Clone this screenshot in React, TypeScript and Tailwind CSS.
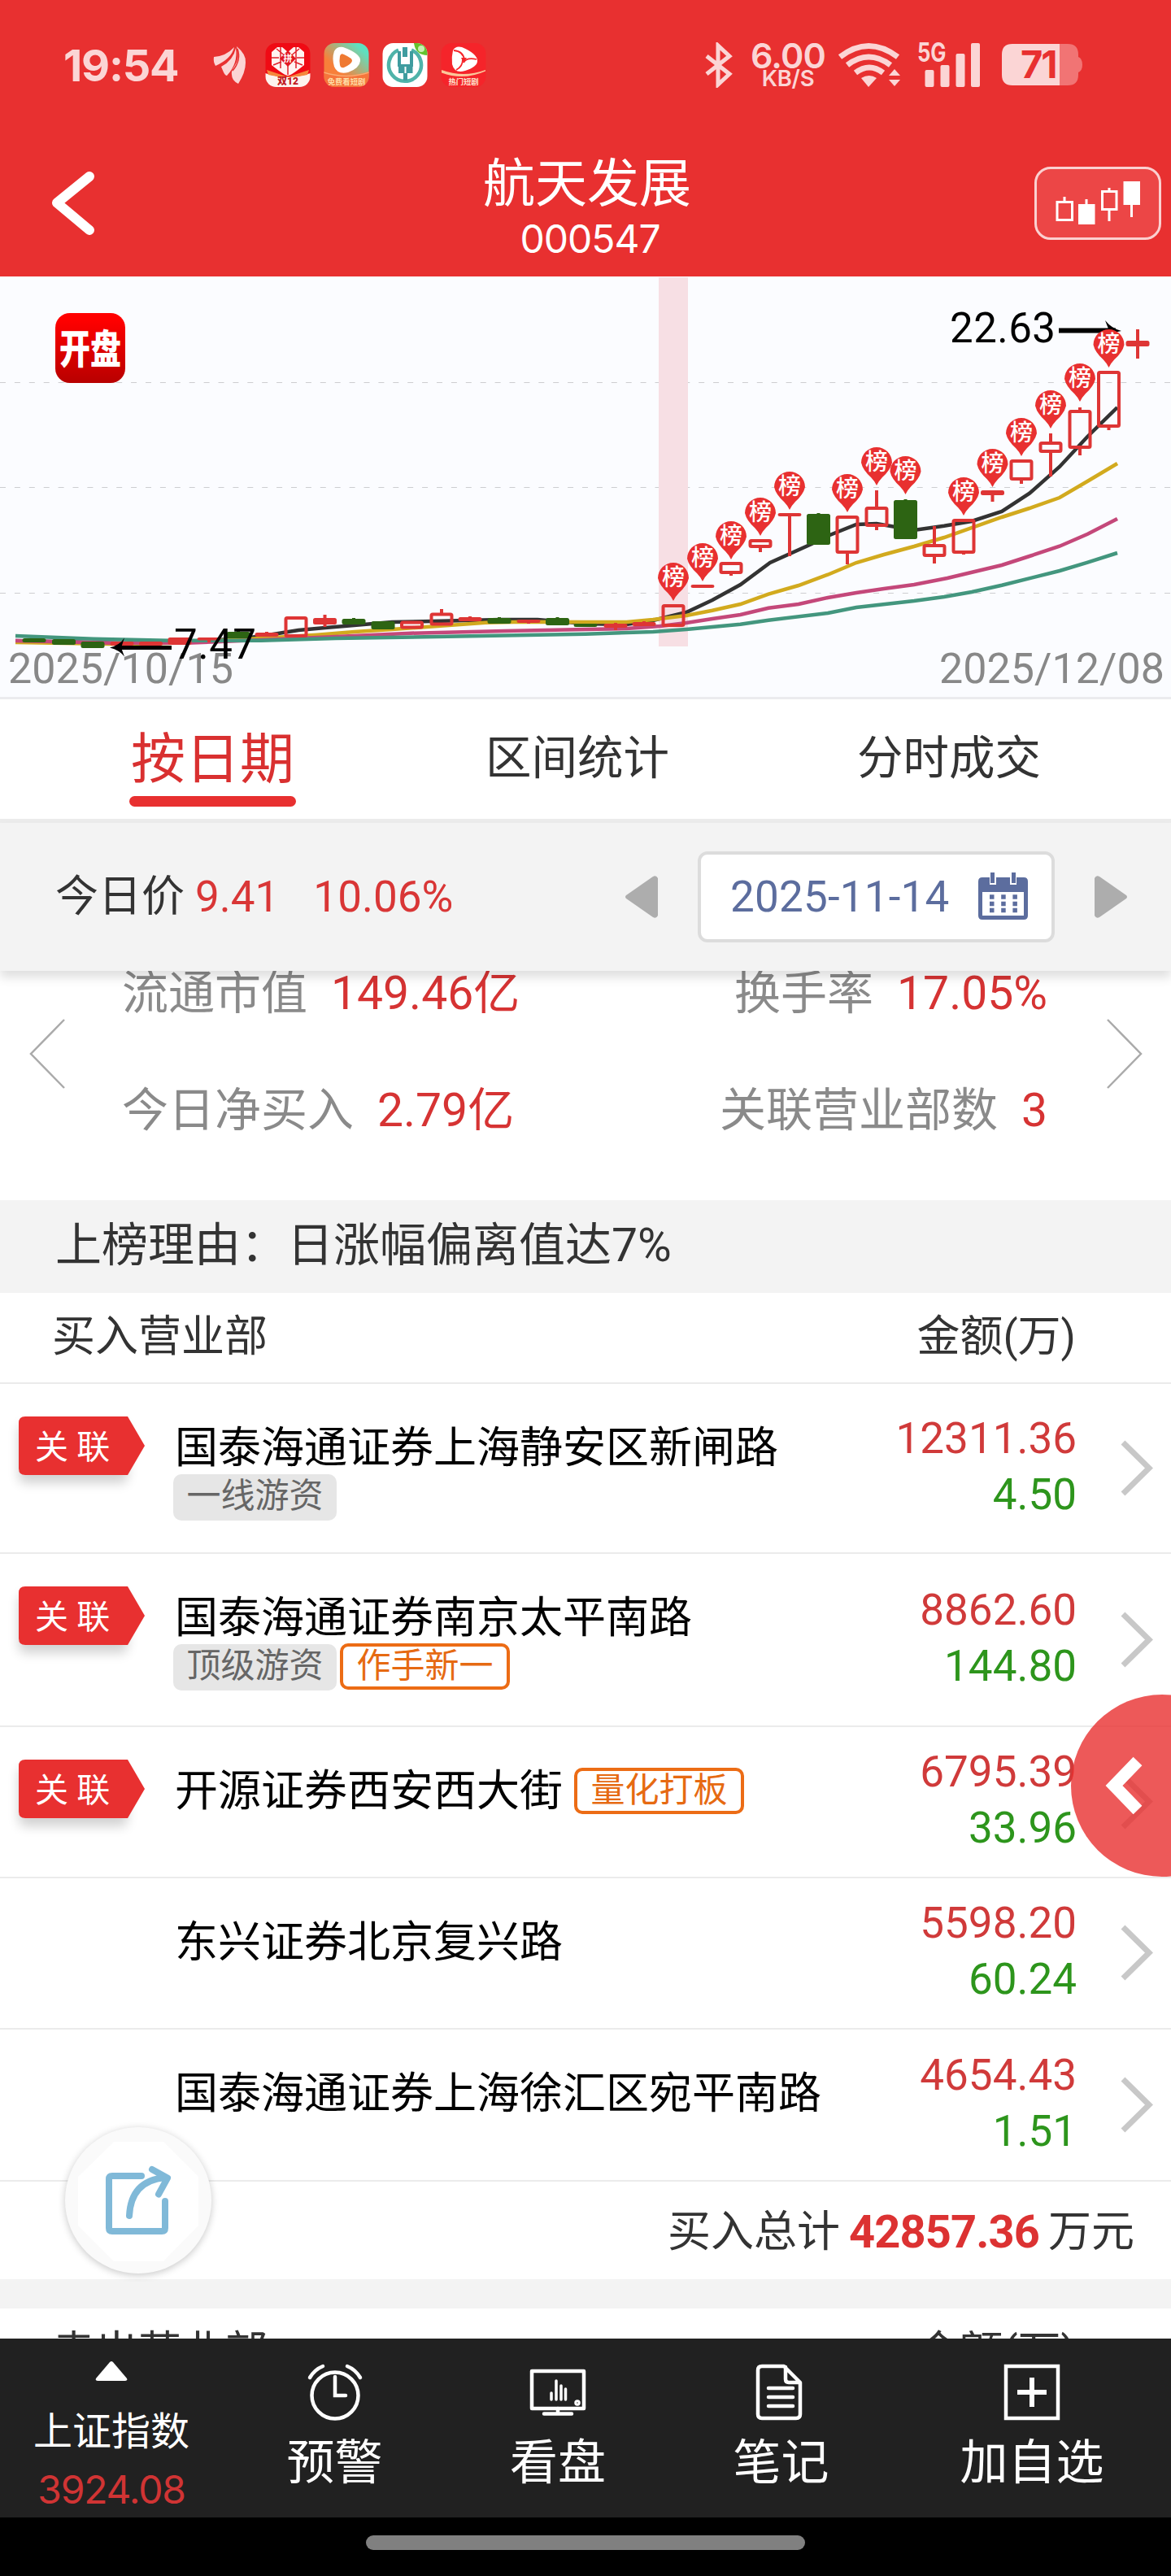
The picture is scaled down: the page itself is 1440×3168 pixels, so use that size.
import type { ReactNode } from "react";
import clsx from "clsx";

type Tag = { text: string; hot?: boolean };
type Dept = { name: string; linked?: boolean; inlineTag?: boolean; tags?: Tag[]; buy: string; sell: string; height: string };

const DEPTS: Dept[] = [
    { name: "国泰海通证券上海静安区新闸路", linked: true, tags: [{ text: "一线游资" }], buy: "12311.36", sell: "4.50", height: "h-[209px]" },
    { name: "国泰海通证券南京太平南路", linked: true, tags: [{ text: "顶级游资" }, { text: "作手新一", hot: true }], buy: "8862.60", sell: "144.80", height: "h-[213px]" },
    { name: "开源证券西安西大街", linked: true, inlineTag: true, tags: [{ text: "量化打板", hot: true }], buy: "6795.39", sell: "33.96", height: "h-[186px]" },
    { name: "东兴证券北京复兴路", buy: "5598.20", sell: "60.24", height: "h-[186px]" },
    { name: "国泰海通证券上海徐汇区宛平南路", buy: "4654.43", sell: "1.51", height: "h-[187px]" },
];

const RED = "#de3535";
const GREEN = "#2d6413";

// x, body top, body bottom, high, low, kind (g: falling, r: solid red, o: hollow red)
const CANDLES: [number, number, number, number, number, string][] = [
    [42, 785, 790, 785, 790, "g"],
    [78.5, 786, 793, 786, 793, "g"],
    [114, 789, 797, 789, 797, "g"],
    [150, 789, 794, 789, 794, "r"],
    [185.5, 789, 794, 789, 794, "r"],
    [221, 784, 793, 784, 793, "r"],
    [257, 784, 787.5, 784, 790, "r"],
    [293, 777, 785, 776, 785, "g"],
    [328, 778, 783, 777, 783, "r"],
    [364, 758, 784, 758, 784, "o"],
    [399.5, 760, 768, 756, 771, "r"],
    [435, 761, 768, 760, 768, "g"],
    [471, 764, 774, 764, 774, "g"],
    [506.5, 763.5, 773.5, 763.5, 773.5, "o"],
    [543, 753.5, 769.5, 749, 769.5, "o"],
    [578, 759, 764, 758, 764, "r"],
    [614, 760, 767, 759, 767, "g"],
    [650, 762, 766, 762, 767, "r"],
    [685.5, 760, 769, 759, 769, "g"],
    [720, 767, 771, 767, 771, "g"],
    [757, 767, 772, 766, 775, "r"],
    [792, 765, 770, 764, 770, "r"],
    [828, 743, 771, 743, 771, "o"],
    [864, 719, 723, 719, 723, "r"],
    [899, 691, 706, 691, 708, "o"],
    [935, 663, 674, 663, 679, "o"],
    [971, 631, 635, 631, 684, "r"],
    [1006.5, 632, 670, 631, 670, "g"],
    [1042, 634, 681, 634, 694, "o"],
    [1078, 623, 648, 603, 652, "o"],
    [1113.5, 615, 663, 614, 663, "g"],
    [1149, 669, 685, 647, 693, "o"],
    [1185, 638, 681, 638, 682, "o"],
    [1220.5, 603, 609, 603, 617, "r"],
    [1256, 565, 591, 565, 595, "o"],
    [1292, 543, 557, 533, 586, "o"],
    [1328, 504, 552, 501, 560, "o"],
    [1363.5, 456, 526, 456, 529, "o"],
    [1399, 419, 426, 405, 441, "r"],
];

const PINS = [
    [828, 692], [864, 668], [899, 641], [935, 612], [971, 580], [1042, 583], [1078, 550],
    [1113.5, 561], [1185, 587], [1220.5, 552], [1256, 514], [1292, 480], [1328, 447], [1363.5, 405],
];

const MA = [
    { color: "#333333", points: "19,788 115,790 170,792 207,790 257,788 317,783 367,775 400,772 459,767 482,765 543,763.7 615,762 661,762 720,767 770,768 803,763 844,753 876,738 910.5,719 947,692 998,669 1018,659 1053,645 1078,644 1124,652 1161,646.7 1195,641 1232,629 1266,606.7 1303,574 1337.5,536.7 1374,501" },
    { color: "#d2aa1e", points: "19,790 138,792 207,791 321,785 390,780.7 436,777 482,774 528,770.7 597,765.7 643,764.7 720,765 770.5,765 803,762 844,757 876,750.7 910.5,743 945,730.7 982,720 1018,706.7 1053,692 1087,682 1124,672 1161,661 1232,636 1266,625 1303,612 1337.5,591.7 1374,570" },
    { color: "#c4487a", points: "19,788 138,790.7 230,790.7 321,787 413,783 505,778.7 620,776 720,774 770.5,773 812,770 844,766 876,761 910.5,756 945,747.7 982,743 1018,735 1053,729 1087,724 1124,719 1165,711 1232,695 1266,684 1303,671.7 1337.5,656.7 1374,638" },
    { color: "#43967e", points: "19,782 115,785.7 207,787.7 321,787.7 413,785 551,782.7 720,779.7 803,777 844,774 876,771 910.5,767.7 945,762.7 1018,754 1053,747 1124,739 1161,734 1195,728 1232,719.7 1303,702 1337.5,691.7 1374,680" },
];

function AppIcons() {
    return (
        <svg className="ml-[42px] h-[54px] w-[336px]" viewBox="262 53 336 54">
            <defs>
                <linearGradient id="video" x1="0" y1="1" x2="1" y2="0">
                    <stop offset="0.35" stopColor="#f7803a" />
                    <stop offset="0.85" stopColor="#5fe0c0" />
                </linearGradient>
                <clipPath id="a1"><rect x="326.5" y="53" width="55" height="54" rx="13" /></clipPath>
                <clipPath id="a2"><rect x="398.5" y="53" width="55" height="54" rx="13" /></clipPath>
                <clipPath id="a3"><rect x="470.5" y="53" width="55" height="54" rx="13" /></clipPath>
            </defs>
            <g fill="#fbd5d5">
                <path d="M263 70q15-1 25-12-3 14-23 23-3-5-2-11z" />
                <path d="M272 82q15-8 18-23 3 19-11 34-2 0-4-4z" />
                <path d="M291 57q12 10 11 20 0 12-9 26-8-4-8-11-1-4 3-10 8-11 3-25z" />
            </g>
            <path d="M292 60q5 14-6 27" fill="none" stroke="#e83030" strokeWidth="1.500" />
            <g clipPath="url(#a1)">
                <rect x="326" y="53" width="56" height="54" fill="#f00a14" />
                <path d="M326 90q28 9 56 0v18h-56z" fill="#fdf3ee" />
                <path d="M328 86l24 8h4l24-8-2 6q-24 6-48 0z" fill="#f5883c" />
                <path d="M354 93q-4 0-20-13V64l7-6h6l7 6 7-6h6l7 6v16q-16 13-20 13z" fill="#fff3f1" />
                <path d="M354 81v11M334 71h9M365 71h9M340 60l12 10M368 60l-12 10M345 58v26M364 58v26M336 80l10-4M372 80l-10-4" stroke="#e0202a" strokeWidth="1.500" />
                <path d="M354 62l10 10-10 10-10-10z" fill="#e31822" />
                <text x="354" y="76" fontSize="11" fontWeight="700" fill="#fff" textAnchor="middle">拼</text>
                <text x="354" y="104" fontSize="12" fontWeight="900" fill="#c01820" textAnchor="middle">双12</text>
            </g>
            <g clipPath="url(#a2)">
                <rect x="398" y="53" width="56" height="54" fill="url(#video)" />
                <path d="M398 88q28 9 56 0v20h-56z" fill="#f6753b" />
                <path d="M398 89q28 9 56 0" fill="none" stroke="#f9ad72" strokeWidth="1.500" />
                <path d="M411 63q3-6 11-5 22 8 21 17-1 9-15 14-13 3-17-7-3-10 0-19z" fill="#fff" />
                <path d="M418 69q1-4 5-2 11 5 10 8-1 4-10 8-4 1-5-3-1-5 0-11z" fill="#ef7a33" />
                <text x="426" y="103.500" fontSize="9.300" fontWeight="700" fill="#fde0a8" textAnchor="middle">免费看短剧</text>
            </g>
            <g clipPath="url(#a3)">
                <rect x="470" y="53" width="56" height="54" fill="#fff" />
                <path d="M509 53h17v15q-15 0-17-15z" fill="#63c32f" />
                <path d="M490 61.500a20 20 0 1 0 16 0" stroke="#4fb3a9" strokeWidth="4.500" fill="none" />
                <path d="M495 58h6v12h-6zM489 63h4v16h11V63h4v19h-19zM490 81h7.500v9H490zM499.500 81h8v9h-8zM496 90h5v9h-5z" fill="#3f9c9f" />
                <circle cx="518" cy="60" r="4" fill="#c9efb4" />
            </g>
            <rect x="542.500" y="53" width="55" height="54" rx="13" fill="#f5242a" />
            <path d="M543 86q27 10 54 0v1.500q-27 12-54 2z" fill="#fbc79a" />
            <path d="M557 62q3-6 11-4 19 8 19 17 0 7-15 12-13 4-16-8-1-9 1-17z" fill="#fff" />
            <path d="M558 62q12 1 13 12M586 73q-12-3-16 4M561 86q8-4 8-13" stroke="#f5242a" strokeWidth="1.800" fill="none" />
            <path d="M567 71h7l-4 6z" fill="#f5242a" />
            <text x="570" y="103.500" fontSize="9.300" fontWeight="700" fill="#fde6d0" textAnchor="middle">热门短剧</text>
        </svg>
    );
}

function SystemIcons() {
    return (
        <div className="flex items-center text-[#fbd5d5]">
            <svg className="h-[56px] w-[36px]" viewBox="866 52 36 56">
                <path d="M869 69l28 22-14 13V56l14 13-28 22" fill="none" stroke="#fbd5d5" strokeWidth="5" />
            </svg>
            <div className="ml-[12px] mr-[5px] flex w-[110px] flex-col items-center whitespace-nowrap font-['Inter'] font-semibold">
                <span className="h-[32px] text-[43px] leading-[32px] tracking-[-0.8px]">6.00</span>
                <span className="h-[24px] text-[27.5px] leading-[25px] tracking-[-0.3px]">KB/S</span>
            </div>
            <svg className="h-[56px] w-[80px]" viewBox="1029 52 80 56" fill="#fbd5d5">
                <g fill="none" stroke="#fbd5d5" strokeWidth="7">
                    <path d="M1033 70q35-27 71 0" />
                    <path d="M1042 80q26-20 53 0" />
                    <path d="M1052 89.500q17-13 34 0" />
                </g>
                <path d="M1059 96q10-6 19 0l-10 11z" />
                <path d="M1093 93l7-8 7 8zM1093 98h14l-7 8z" />
            </svg>
            <div className="relative ml-[18px] h-[56px] w-[80px]">
                <svg className="h-[56px] w-[80px]" viewBox="1127 52 80 56" fill="#fbd5d5">
                    <rect x="1137.500" y="86" width="11" height="21" rx="2" />
                    <rect x="1156.500" y="80" width="11" height="27" rx="2" />
                    <rect x="1175.500" y="66" width="11" height="41" rx="2" />
                    <rect x="1194" y="53" width="11" height="54" rx="2" />
                </svg>
                <span className="absolute left-[1px] top-[-3px] origin-left scale-x-80 font-['Inter'] text-[32px] font-bold leading-[32px]">5G</span>
            </div>
            <div className="relative ml-[24px] mt-[2px] h-[56px] w-[102px]">
                <svg className="h-[56px] w-[102px]" viewBox="1230 55 102 56">
                    <path d="M1302 56h10q13 0 13 13v3q5 2 5 9.500t-5 9.500v3q0 13-13 13h-10z" fill="#f17474" />
                    <path d="M1302 56h-58q-13 0-13 13v25q0 13 13 13h58z" fill="#fbd5d5" />
                </svg>
                <span className="absolute left-[24px] top-[2px] font-['Inter'] text-[47px] font-bold leading-[48px] tracking-[-2px] text-[#e83030]">71</span>
            </div>
        </div>
    );
}

function Header() {
    return (
        <header className="h-[340px] bg-[#e83030] text-white">
            {/* STATUS BAR */}
            <div className="flex h-[160px] items-center pl-[78px] pr-[107px]">
                <div className="w-[142px] whitespace-nowrap font-['Inter'] text-[54px] font-bold tracking-[-1.2px] text-[#fbd5d5]">19:54</div>
                <AppIcons />
                <div className="ml-auto"><SystemIcons /></div>
            </div>

            {/* TITLE */}
            <div className="flex h-[180px] items-start pl-[62px] pr-[12px]">
                <svg className="mt-[48px] h-[84px] w-[58px]" viewBox="62 208 58 84">
                    <path d="M110 217L70 249.500L110 283" fill="none" stroke="#fff" strokeWidth="12" strokeLinecap="round" strokeLinejoin="round" />
                </svg>
                <div className="ml-[52px] flex-1 pt-[27px] text-center">
                    <h1 className="text-[64px] leading-[80px]">航天发展</h1>
                    <p className="pl-[7px] font-['Inter'] text-[48px] leading-[54px] tracking-[-1px]">000547</p>
                </div>
                <button className="mt-[45px] h-[90px] w-[156px] rounded-[20px] border-3 border-[#fbd0d0] bg-[#ec4646]">
                    <svg className="h-[84px] w-[150px]" viewBox="1275 208 150 84" fill="none" stroke="#fff" strokeWidth="3">
                        <path d="M1309 242v5M1300 248.500h18.500v22h-18.500z" />
                        <path d="M1336 245v8M1327.500 252.500h17.500v22h-17.500z" fill="#fff" />
                        <path d="M1364 231v5M1355.500 235.500h17.500v22h-17.500zM1364 258v14" />
                        <path d="M1391.500 251v16M1383 224.500h17.500v26H1383z" fill="#fff" />
                    </svg>
                </button>
            </div>
        </header>
    );
}

function KLineChart() {
    return (
        <svg className="block h-[520px] w-full border-b-3 border-[#ebebee] bg-[#fbfcff]" viewBox="0 340 1440 517" preserveAspectRatio="none">
            <defs>
                <linearGradient id="logo" x1="0" y1="0" x2="0" y2="1">
                    <stop offset="0.1" stopColor="#ff0000" />
                    <stop offset="1" stopColor="#b80000" />
                </linearGradient>
            </defs>
            {[470, 599, 729].map((y) => (
                <line key={y} x1="0" x2="1440" y1={y + 0.5} y2={y + 0.5} stroke="#cdcdd0" strokeDasharray="7 10.900" />
            ))}
            <rect x="810" y="341" width="36" height="454" fill="#f7dfe4" />
            <rect x="68" y="385" width="86" height="86" rx="18" fill="url(#logo)" />
            <text transform="translate(111 447) scale(1 1.280)" fontSize="38" fontWeight="900" fill="#fff" textAnchor="middle">开盘</text>

            <text x="10" y="840" fontSize="52" fill="#888" textLength="277">2025/10/15</text>
            <text x="1155" y="840" fontSize="52" fill="#888" textLength="277">2025/12/08</text>

            {MA.map((line) => (
                <polyline key={line.color} points={line.points} fill="none" stroke={line.color} strokeWidth="4.500" />
            ))}
            {CANDLES.map(([x, top, bottom, high, low, kind]) => {
                const color = kind === "g" ? GREEN : RED;
                return (
                    <g key={x}>
                        {high < top && <line x1={x} x2={x} y1={high} y2={top + 2} stroke={color} strokeWidth="4" />}
                        {low > bottom && <line x1={x} x2={x} y1={bottom - 2} y2={low} stroke={color} strokeWidth="4" />}
                        {kind === "o" ? (
                            <rect x={x - 12.5} y={top + 2} width="25" height={bottom - top - 4} rx="1.500" fill="none" stroke={color} strokeWidth="4" />
                        ) : (
                            <rect x={x - 14.5} y={top} width="29" height={bottom - top} rx="2.500" fill={color} />
                        )}
                    </g>
                );
            })}
            <path d="M211 796.500h-68" stroke="#000" strokeWidth="5" />
            <path d="M135 796.500q12-3 18-12l-4 12 4 11q-6-8-18-11z" />
            <text x="214" y="809.500" fontSize="51" textLength="101">7.47</text>
            <text x="1168" y="421" fontSize="51" textLength="130">22.63</text>
            <path d="M1302 406.500h70" stroke="#000" strokeWidth="6" />
            <path d="M1379 407q-12-3-20-13l5 13-5 9q8-7 20-9z" />
            {PINS.map(([x, y]) => (
                <g key={x} transform={`translate(${x} ${y})`}>
                    <path d="M-19 19A19 19 0 1 1 19 19Q17 28 7 37Q3 41 0 47Q-3 41-7 37Q-17 28-19 19z" fill="#e83030" />
                    <text y="28" fontSize="28" fontWeight="500" fill="#fff" textAnchor="middle">榜</text>
                </g>
            ))}
        </svg>
    );
}

function Tabs() {
    return (
        <nav className="flex h-[152px] items-start border-b-5 border-[#ececec] bg-white text-[56.500px] text-[#333]">
            <div className="ml-[159px] w-[205px] text-center text-[67px] leading-[80px] text-[#d93030]">
                <div className="mt-[34px]">按日期</div>
                <div className="mt-[5px] h-[13px] rounded-full bg-[#e83030]" />
            </div>
            <div className="ml-[232px] mt-[33px] w-[228px] whitespace-nowrap text-center leading-[80px]">区间统计</div>
            <div className="ml-[229px] mt-[33px] w-[228px] whitespace-nowrap text-center leading-[80px]">分时成交</div>
        </nav>
    );
}

function DateBar() {
    return (
        <div className="relative z-10 flex h-[182px] items-center bg-[#f3f3f3] pl-[68px] text-[53px] leading-[60px] shadow-[0_8px_12px_rgba(0,0,0,0.13)]">
            <span className="text-[#333]">今日价</span>
            <span className="ml-[13px] text-[#d93636]">9.41</span>
            <span className="ml-[42px] text-[#d93636]">10.06%</span>
            <svg className="ml-auto h-[52px] w-[40px]" viewBox="0 0 40 52"><path d="M40 3v46q-2 4-6 2L1 28q-2-2 0-4L34 1q4-2 6 2z" fill="#adadad" /></svg>
            <div className="ml-[49px] flex h-[112px] w-[439px] items-center rounded-[12px] border-4 border-[#dcdcdc] bg-white pl-[36px] text-[#5c6d9e]">
                <span className="tracking-[0.2px]">2025-11-14</span>
                <svg className="mb-[2px] ml-auto mr-[29px] h-[58px] w-[61px]" viewBox="0 0 61 58">
                    <path d="M5 6h9v9h8V6h17v9h8V6h9q5 0 5 5v42q0 5-5 5H5q-5 0-5-5V11q0-5 5-5zM5 24v29h51V24z" fill="#5c6d9e" fillRule="evenodd" />
                    <path d="M15 0h5v13h-5zM41 0h5v13h-5z" fill="#5c6d9e" />
                    <path d="M14 30h42M14 38.500h42M14 46.500h42" stroke="#5c6d9e" strokeWidth="5.500" strokeDasharray="5.500 8.700 5.500 8.700 5.500 40" />
                </svg>
            </div>
            <svg className="ml-[49px] mr-[54px] h-[52px] w-[40px]" viewBox="0 0 40 52"><path d="M0 3v46q2 4 6 2l33-23q2-2 0-4L6 1Q2-1 0 3z" fill="#adadad" /></svg>
        </div>
    );
}

function Stat({ label, value }: { label: string; value: string }) {
    return (
        <div className="flex whitespace-nowrap">
            <span className="text-[#8a8a8a]">{label}</span>
            <span className="ml-[29px] text-[#d63333]">{value}</span>
        </div>
    );
}

function Stats() {
    return (
        <section className="flex h-[282px] items-start bg-white text-[57px] leading-[60px]">
            <svg className="ml-[35px] mt-[59px] h-[86px] w-[46px]" viewBox="0 0 46 86"><path d="M44 1L3 43l41 42" fill="none" stroke="#aaa" strokeWidth="2.500" /></svg>
            <div className="ml-[69px] mr-[72px] flex-1">
                <div className="-mt-[2px] flex justify-between">
                    <Stat label="流通市值" value="149.46亿" />
                    <Stat label="换手率" value="17.05%" />
                </div>
                <div className="mt-[84px] flex justify-between">
                    <Stat label="今日净买入" value="2.79亿" />
                    <Stat label="关联营业部数" value="3" />
                </div>
            </div>
            <svg className="mr-[34px] mt-[59px] h-[86px] w-[46px]" viewBox="0 0 46 86"><path d="M2 1l41 42L2 85" fill="none" stroke="#aaa" strokeWidth="2.500" /></svg>
        </section>
    );
}

function TableHead({ title }: { title: string }) {
    return (
        <div className="flex h-[112px] shrink-0 items-center justify-between border-b-2 border-[#ebebeb] bg-white pb-[2px] pl-[64px] pr-[117px] text-[53px] leading-[60px] text-[#333]">
            <span>{title}</span>
            <span>金额(万)</span>
        </div>
    );
}

function TagBadge({ text, hot }: Tag) {
    return (
        <span
            className={clsx(
                "flex h-[57px] items-center justify-center whitespace-nowrap rounded-[10px] text-[42px] leading-[42px]",
                hot ? "mb-[2px] w-[209px] border-4 border-[#ec6c15] bg-white text-[#e66a12]" : "w-[201px] bg-[#e6e6e6] pb-[2px] text-[#666]",
            )}
        >
            {text}
        </span>
    );
}

function DeptRow({ dept }: { dept: Dept }) {
    return (
        <div className={clsx("flex items-center border-b-2 border-[#ebebeb] bg-white", dept.height)}>
            <div className="w-[213px] self-start pl-[23px] pt-[40px]">
                {dept.linked && (
                    <div className="relative h-[72px] w-[155px]">
                        <div className="absolute left-0 top-0 h-[72px] w-[134px] rounded-[8px] shadow-[0_10px_14px_rgba(0,0,0,0.18)]" />
                        <svg className="absolute left-0 top-0 h-[72px] w-[155px]" viewBox="0 0 155 72">
                            <path d="M8 0h126l21 36-21 36H8q-8 0-8-8V8q0-8 8-8z" fill="#e83030" />
                        </svg>
                        <span className="relative block whitespace-nowrap pl-[20px] text-[41px] leading-[76px] text-white">关 联</span>
                    </div>
                )}
            </div>
            <div className={clsx("flex-1 self-start", dept.inlineTag && "flex items-center")}>
                <div className="pt-[49px]">
                    <div className="whitespace-nowrap pl-[2px] text-[53px] leading-[60px] text-black">{dept.name}</div>
                </div>
                {dept.tags && (
                    <div className={clsx("flex items-center gap-[4px]", dept.inlineTag ? "ml-[14px] pt-[49px]" : "h-[60px]")}>
                        {dept.tags.map((tag) => <TagBadge key={tag.text} {...tag} />)}
                    </div>
                )}
            </div>
            <div className="pb-[4px] text-right text-[53px] leading-[69px]">
                <div className="text-[#d03a3a]">{dept.buy}</div>
                <div className="text-[#2d951c]">{dept.sell}</div>
            </div>
            <svg className="ml-[53px] mr-[20px] h-[70px] w-[43px]" viewBox="0 0 43 70">
                <path d="M4 3l32 31.500L4 66" fill="none" stroke="#c8c8c8" strokeWidth="7" />
            </svg>
        </div>
    );
}

function NavItem({ label, className, children }: { label: string; className: string; children: ReactNode }) {
    return (
        <div className={clsx("flex flex-col items-center pt-[31px]", className)}>
            <svg className="h-[70px] w-[70px]" viewBox="0 0 70 70" fill="none" stroke="#fff" strokeWidth="4.500" strokeLinecap="round">{children}</svg>
            <span className="mt-[16px] text-[59px] leading-[72px]">{label}</span>
        </div>
    );
}

function BottomNav() {
    return (
        <footer className="h-[292px] bg-black">
            <div className="flex h-[220px] bg-[#212121] text-white">
                <div className="flex w-[274px] flex-col items-center pt-[28px]">
                    <svg className="h-[24px] w-[40px]" viewBox="0 0 40 24"><path d="M18 1q2-2 4 0l17 20q1 3-2 3H3q-3 0-2-3z" fill="#fff" /></svg>
                    <span className="mt-[31px] text-[48px] leading-[64px]">上证指数</span>
                    <span className="mt-[7px] font-['Inter'] text-[48px] leading-[64px] tracking-[-1.2px] text-[#d03434]">3924.08</span>
                </div>
                <NavItem label="预警" className="w-[275px]">
                    <circle cx="35" cy="39" r="28.500" />
                    <path d="M35 16v23h13M4 17Q10 7 20 3M66 17Q60 7 50 3" />
                </NavItem>
                <NavItem label="看盘" className="w-[274px]">
                    <path d="M3 9h64v46H3z" strokeLinejoin="round" />
                    <path d="M35 55v6M18 61.500h34" />
                    <path d="M27 36v8M33 21v23M39 27v17M44.500 31v13" strokeWidth="3.500" />
                    <circle cx="59" cy="48" r="1.500" />
                </NavItem>
                <NavItem label="笔记" className="w-[275px]">
                    <path d="M11 3h27l20 20v39q0 5-5 5H11q-5 0-5-5V8q0-5 5-5zM40 4v15q0 4 4 4h13" strokeLinejoin="round" />
                    <path d="M19 30h30M19 41h30M19 52h30" />
                </NavItem>
                <NavItem label="加自选" className="w-[342px]">
                    <path d="M3 3h64v64H3z" strokeLinecap="butt" />
                    <path d="M35 17v36M17 35h36" strokeWidth="6" strokeLinecap="butt" />
                </NavItem>
            </div>
            <div className="mx-auto mt-[22px] h-[18px] w-[540px] rounded-full bg-[#808080]" />
        </footer>
    );
}

function App() {
    return (
        <div className="relative flex h-[3168px] w-[1440px] flex-col overflow-hidden bg-white font-['Roboto','Noto_Sans_CJK_SC',sans-serif]" lang="zh-CN">
            <Header />
            <KLineChart />
            <Tabs />
            <DateBar />
            <Stats />
            <div className="h-[114px] bg-[#f3f3f3] pl-[68px] pt-[26px] text-[57px] leading-[60px] text-[#333]">上榜理由：日涨幅偏离值达7%</div>
            <TableHead title="买入营业部" />
            {DEPTS.map((dept) => <DeptRow key={dept.name} dept={dept} />)}
            <div className="flex h-[120px] items-center justify-end bg-white pr-[45px] pt-[4px] text-[53px] leading-[60px] text-[#333]">
                买入总计
                <span className="ml-[11px] mr-[11px] text-[56px] font-bold tracking-[-0.9px] text-[#dc3232]">42857.36</span>
                万元
            </div>
            <div className="h-[36px] bg-[#f3f3f3]" />
            <div className="flex h-[37px] flex-col overflow-hidden">
                <TableHead title="卖出营业部" />
            </div>
            <BottomNav />

            {/* FLOATING SHARE BUTTON */}
            <button className="absolute left-[80px] top-[2616px] h-[180px] w-[180px] rounded-full bg-[#fafafa] shadow-[0_2px_10px_rgba(0,0,0,0.22)]">
                <svg className="h-[180px] w-[180px]" viewBox="80 2616 180 180" fill="none" stroke="#80b9d8" strokeWidth="8" strokeLinecap="round" strokeLinejoin="round">
                    <path d="M140 2634h61l43 43v60l-43 44h-61l-44-44v-60z" fill="#fff" stroke="none" />
                    <path d="M174 2676h-36q-4 0-4 4v60q0 4 4 4h61q4 0 4-4v-33" />
                    <path d="M159 2725q2-43 44-47M187 2668l19 10.500-11 20" />
                </svg>
            </button>

            {/* SIDE DRAWER HANDLE */}
            <button className="absolute right-[-101px] top-[2084px] h-[224px] w-[224px] rounded-full bg-[#e83030]/80">
                <svg className="ml-[40px] h-[80px] w-[60px]" viewBox="0 0 60 80">
                    <path d="M42 10L13 40l29 30" fill="none" stroke="#fff" strokeWidth="15" />
                </svg>
            </button>
        </div>
    );
}

export default App;
